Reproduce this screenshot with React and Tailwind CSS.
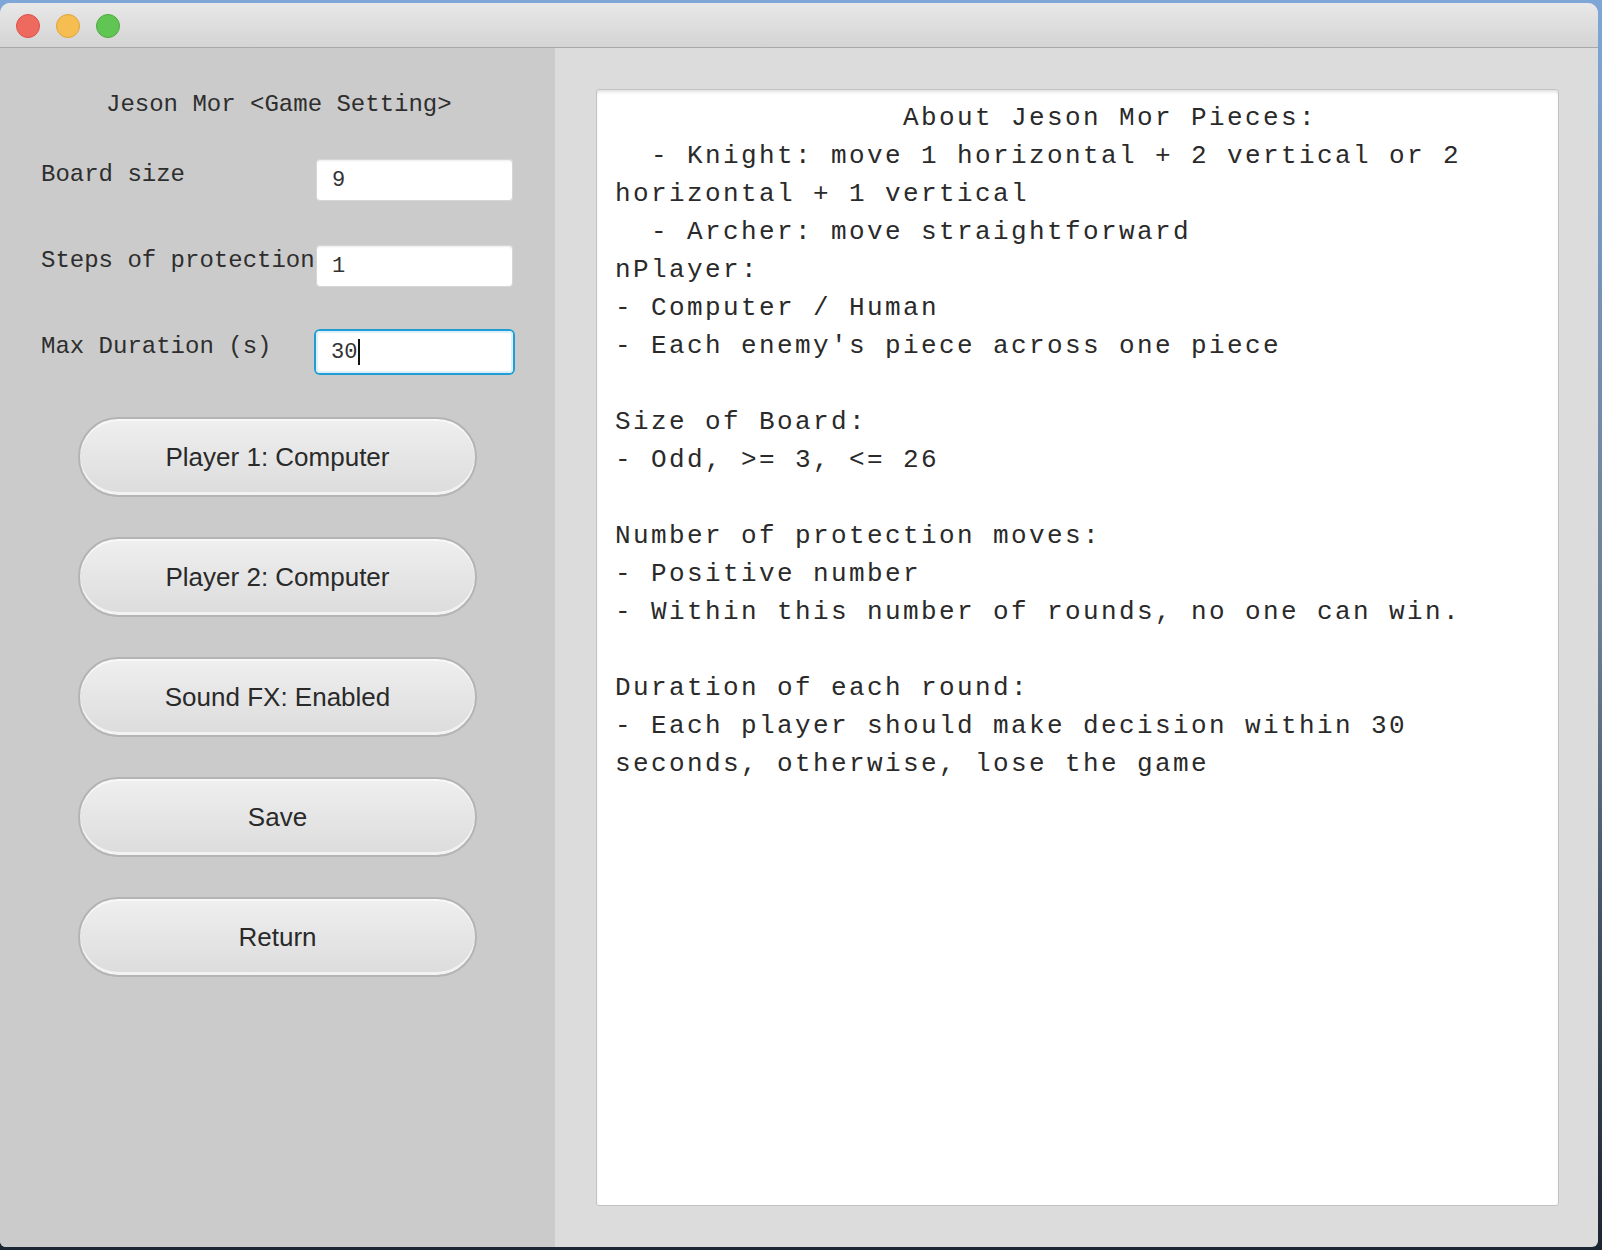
const mono = { fontFamily: '"Liberation Mono", "DejaVu Sans Mono", monospace' };
const sans = { fontFamily: '"Liberation Sans", Arial, sans-serif' };

const aboutLines = [
  "                About Jeson Mor Pieces:",
  "  - Knight: move 1 horizontal + 2 vertical or 2",
  "horizontal + 1 vertical",
  "  - Archer: move straightforward",
  "nPlayer:",
  "- Computer / Human",
  "- Each enemy's piece across one piece",
  "",
  "Size of Board:",
  "- Odd, >= 3, <= 26",
  "",
  "Number of protection moves:",
  "- Positive number",
  "- Within this number of rounds, no one can win.",
  "",
  "Duration of each round:",
  "- Each player should make decision within 30",
  "seconds, otherwise, lose the game",
];

function Field({ label, value, focused }) {
  return (
    <div className="flex items-start">
      <div
        className="w-[316px] shrink-0 pl-[41px] pt-[2px] text-[24px] leading-[28px] text-[#2e2e2e] whitespace-nowrap"
        style={mono}
      >
        {label}
      </div>
      <div
        className={
          focused
            ? "flex h-[42px] w-[197px] items-center rounded-[4px] bg-white pl-[15px] text-[22px] text-[#333] shadow-[0_0_0_2px_#1d9fd6,inset_0_0_0_2px_#dff0f8]"
            : "flex h-[42px] w-[197px] items-center rounded-[4px] border border-[#d6d6d6] bg-white pl-[15px] text-[22px] text-[#333] shadow-[inset_0_2px_2px_-1px_rgba(0,0,0,0.08)]"
        }
        style={mono}
      >
        <span>{value}</span>
        {focused && <span className="ml-[1px] h-[26px] w-[2px] bg-[#111]" />}
      </div>
    </div>
  );
}

function PillButton({ children }) {
  return (
    <button
      className="flex h-[80px] w-[399px] items-center justify-center rounded-full border-2 border-[#b4b4b4] bg-gradient-to-b from-[#efefef] to-[#dcdcdc] text-[26px] text-[#2a2a2a] shadow-[inset_0_2px_0_#f8f8f8,inset_0_-3px_0_#f3f3f3]"
      style={sans}
    >
      {children}
    </button>
  );
}

export default function App() {
  return (
    <div className="h-[1250px] w-[1602px] overflow-hidden bg-gradient-to-b from-[#7ea6d6] via-[#6d7f93] to-[#1b2633] pt-[3px]">
      <div className="flex h-[1244px] w-[1598px] flex-col overflow-hidden rounded-t-[10px] rounded-b-[6px] bg-[#dcdcdc]">
        {/* title bar */}
        <div className="flex h-[45px] shrink-0 items-center gap-[16px] border-b border-[#a8a8a8] bg-gradient-to-b from-[#e8e8e8] to-[#d4d4d4] pl-[16px] pt-[2px]">
          <span className="h-[24px] w-[24px] rounded-full border border-[#dc5147] bg-[#ee6a5f]" />
          <span className="h-[24px] w-[24px] rounded-full border border-[#dca43a] bg-[#f6be50]" />
          <span className="h-[24px] w-[24px] rounded-full border border-[#4ea93f] bg-[#61c554]" />
        </div>

        <div className="flex flex-1">
          {/* settings side */}
          <div className="flex w-[555px] flex-col bg-[#cbcbcb] pt-[43px]">
            <div
              className="pl-[106px] text-[24px] leading-[28px] text-[#2e2e2e] whitespace-nowrap"
              style={mono}
            >
              Jeson Mor &lt;Game Setting&gt;
            </div>

            <div className="mt-[40px] flex flex-col gap-[44px]">
              <Field label="Board size" value="9" />
              <Field label="Steps of protection" value="1" />
              <Field label="Max Duration (s)" value="30" focused />
            </div>

            <div className="mt-[44px] flex flex-col gap-[40px] pl-[78px]">
              <PillButton>Player 1: Computer</PillButton>
              <PillButton>Player 2: Computer</PillButton>
              <PillButton>Sound FX: Enabled</PillButton>
              <PillButton>Save</PillButton>
              <PillButton>Return</PillButton>
            </div>
          </div>

          {/* about text */}
          <div className="flex flex-1 p-[41px] pr-[39px]">
            <div className="flex-1 rounded-[3px] border border-[#c2c2c2] bg-white pl-[18px] pt-[9px] shadow-[inset_0_3px_4px_-2px_rgba(0,0,0,0.18)]">
              <div
                className="text-[26px] leading-[38px] tracking-[2.4px] text-[#2a2a2a] whitespace-pre"
                style={mono}
              >
                {aboutLines.map((line, i) => (
                  <div key={i} className="h-[38px]">
                    {line}
                  </div>
                ))}
              </div>
            </div>
          </div>
        </div>
      </div>
    </div>
  );
}
